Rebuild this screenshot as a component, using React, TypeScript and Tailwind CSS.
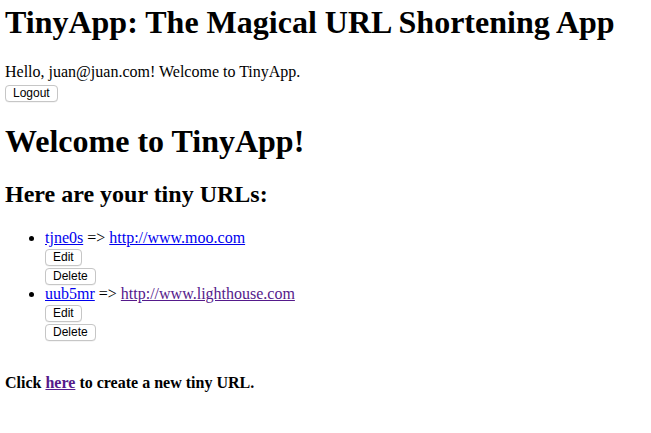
import React from 'react';

interface TinyUrl {
  id: string;
  longURL: string;
  visited?: boolean;
}

const urls: TinyUrl[] = [
  { id: 'tjne0s', longURL: 'http://www.moo.com' },
  { id: 'uub5mr', longURL: 'http://www.lighthouse.com', visited: true },
];

function Btn({ children }: { children: React.ReactNode }) {
  return (
    <button className="h-[17px] rounded-[4px] border border-[#c6c6c6] bg-white px-[7px] font-['Liberation_Sans',Arial,sans-serif] text-[12px] leading-[15px] text-black shadow-[0_0.5px_0.5px_rgba(0,0,0,0.08)]">
      {children}
    </button>
  );
}

export default function App() {
  return (
    <div className="min-h-screen bg-white pl-[5px] pt-[4px] font-['Liberation_Serif','Times_New_Roman',serif] text-base text-black">
      <h1 className="text-[32px] font-bold leading-[37px]">TinyApp: The Magical URL Shortening App</h1>

      <p className="mt-[22px] leading-[18px]">Hello, juan@juan.com! Welcome to TinyApp.</p>
      <div className="mt-[4px] flex">
        <Btn>Logout</Btn>
      </div>

      <h1 className="mt-[21px] text-[32px] font-bold leading-[37px]">Welcome to TinyApp!</h1>
      <h2 className="mt-[20px] text-[24px] font-bold leading-[28px]">Here are your tiny URLs:</h2>

      <ul className="mt-[21px] list-disc pl-10">
        {urls.map((url) => (
          <li key={url.id} className="leading-[18px]">
            <a href="#" className="text-[#0000ee] underline">
              {url.id}
            </a>{' '}
            =&gt;{' '}
            <a href="#" className={url.visited ? 'text-[#551a8b] underline' : 'text-[#0000ee] underline'}>
              {url.longURL}
            </a>
            <div className="flex h-[19px] items-start pt-[2px]">
              <Btn>Edit</Btn>
            </div>
            <div className="flex h-[19px] items-start pt-[2px]">
              <Btn>Delete</Btn>
            </div>
          </li>
        ))}
      </ul>

      <p className="mt-[33px] font-bold leading-[18px]">
        Click{' '}
        <a href="#" className="text-[#551a8b] underline">
          here
        </a>{' '}
        to create a new tiny URL.
      </p>
    </div>
  );
}
